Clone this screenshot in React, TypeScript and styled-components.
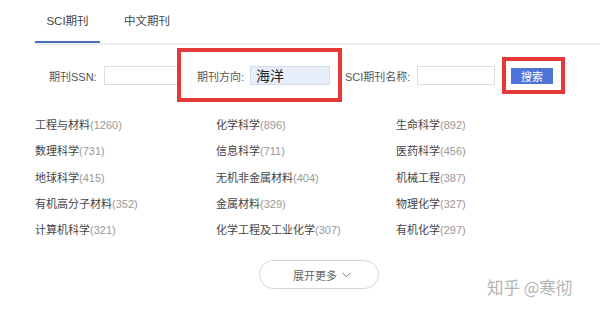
import React from "react";
import styled, { createGlobalStyle } from "styled-components";

const Global = createGlobalStyle`
  html, body { margin: 0; padding: 0; background: #fff; }
  body {
    font-family: "Liberation Sans", Arial, "Noto Sans CJK SC", sans-serif;
    color: #333;
  }
`;

const Page = styled.div`
  position: relative;
  width: 600px;
  height: 309px;
  overflow: hidden;
  background: #fff;
`;

const TabBar = styled.div`
  display: flex;
  margin-left: 35px;
  height: 43px;
  border-bottom: 2px solid #eeeeee;
`;

const Tab = styled.div<{ $active?: boolean; $w: number }>`
  width: ${(p) => p.$w}px;
  height: 43px;
  line-height: 43px;
  font-size: 11.5px;
  color: #444;
  text-align: center;
  box-sizing: border-box;
  border-bottom: 2px solid ${(p) => (p.$active ? "#4a6cc0" : "transparent")};
  margin-bottom: -2px;
`;

const FormRow = styled.div`
  display: flex;
  align-items: center;
  margin: 21px 0 0 49px;
  height: 19px;
`;

const Field = styled.div<{ $gap: number }>`
  display: flex;
  align-items: center;
  margin-right: ${(p) => p.$gap}px;
  position: relative;
`;

const Label = styled.span<{ $w: number }>`
  width: ${(p) => p.$w}px;
  font-size: 11px;
  color: #555;
  white-space: nowrap;
`;

const Input = styled.div<{ $w: number; $filled?: boolean }>`
  width: ${(p) => p.$w}px;
  height: 19px;
  box-sizing: border-box;
  border: 1px solid ${(p) => (p.$filled ? "#d3dcec" : "#dcdcdc")};
  background: ${(p) => (p.$filled ? "#e8effb" : "#fff")};
  font-family: "Noto Sans CJK SC", sans-serif;
  font-size: 14px;
  line-height: 17px;
  padding-left: 5px;
  color: #222;
`;

const Highlight = styled.div<{ $t: number; $r: number; $b: number; $l: number }>`
  position: relative;
  display: flex;
  align-items: center;
  &::after {
    content: "";
    position: absolute;
    top: -${(p) => p.$t}px;
    right: -${(p) => p.$r}px;
    bottom: -${(p) => p.$b}px;
    left: -${(p) => p.$l}px;
    border: 4px solid #e5383b;
    pointer-events: none;
  }
`;

const SearchButton = styled.div`
  width: 42px;
  height: 16px;
  background: #4f74d9;
  color: #fff;
  font-size: 11px;
  line-height: 16px;
  text-align: center;
  font-family: "Noto Sans CJK SC", sans-serif;
`;

const Grid = styled.div`
  display: grid;
  grid-template-columns: 181px 180px auto;
  grid-auto-rows: 26.25px;
  margin: 27px 0 0 35px;
`;

const Item = styled.div`
  font-size: 11px;
  line-height: 26.25px;
  color: #444;
  white-space: nowrap;
`;

const Count = styled.span`
  color: #999;
`;

const MoreRow = styled.div`
  margin: 17px 0 0 259px;
`;

const MoreButton = styled.div`
  width: 120px;
  height: 29px;
  box-sizing: border-box;
  border: 1px solid #d6d6d6;
  border-radius: 15px;
  display: flex;
  align-items: center;
  justify-content: center;
  gap: 5px;
  font-size: 11px;
  color: #666;
  padding-left: 6px;
`;

const Watermark = styled.div`
  position: absolute;
  left: 487px;
  top: 277px;
  font-family: "Noto Sans CJK SC", sans-serif;
  font-size: 16.5px;
  line-height: 20px;
  color: #b4b4b4;
  white-space: nowrap;
`;

const categories: [string, number][] = [
  ["工程与材料", 1260],
  ["化学科学", 896],
  ["生命科学", 892],
  ["数理科学", 731],
  ["信息科学", 711],
  ["医药科学", 456],
  ["地球科学", 415],
  ["无机非金属材料", 404],
  ["机械工程", 387],
  ["有机高分子材料", 352],
  ["金属材料", 329],
  ["物理化学", 327],
  ["计算机科学", 321],
  ["化学工程及工业化学", 307],
  ["有机化学", 297],
];

export default function App() {
  return (
    <Page>
      <Global />
      <TabBar>
        <Tab $active $w={65}>SCI期刊</Tab>
        <Tab $w={94}>中文期刊</Tab>
      </TabBar>
      <FormRow>
        <Field $gap={17}>
          <Label $w={55}>期刊SSN:</Label>
          <Input $w={76} />
        </Field>
        <Field $gap={15}>
          <Highlight $t={18} $r={12} $b={17} $l={20}>
            <Label $w={53}>期刊方向:</Label>
            <Input $w={80} $filled>海洋</Input>
          </Highlight>
        </Field>
        <Field $gap={16}>
          <Label $w={72}>SCI期刊名称:</Label>
          <Input $w={78} />
        </Field>
        <Highlight $t={11} $r={12} $b={10} $l={9}>
          <SearchButton>搜索</SearchButton>
        </Highlight>
      </FormRow>
      <Grid>
        {categories.map(([name, n]) => (
          <Item key={name}>
            {name}
            <Count>({n})</Count>
          </Item>
        ))}
      </Grid>
      <MoreRow>
        <MoreButton>
          展开更多
          <svg width="9" height="6" viewBox="0 0 9 6" fill="none">
            <path d="M0.5 0.8 L4.5 4.8 L8.5 0.8" stroke="#777" strokeWidth="1" />
          </svg>
        </MoreButton>
      </MoreRow>
      <Watermark>知乎 @寒彻</Watermark>
    </Page>
  );
}
